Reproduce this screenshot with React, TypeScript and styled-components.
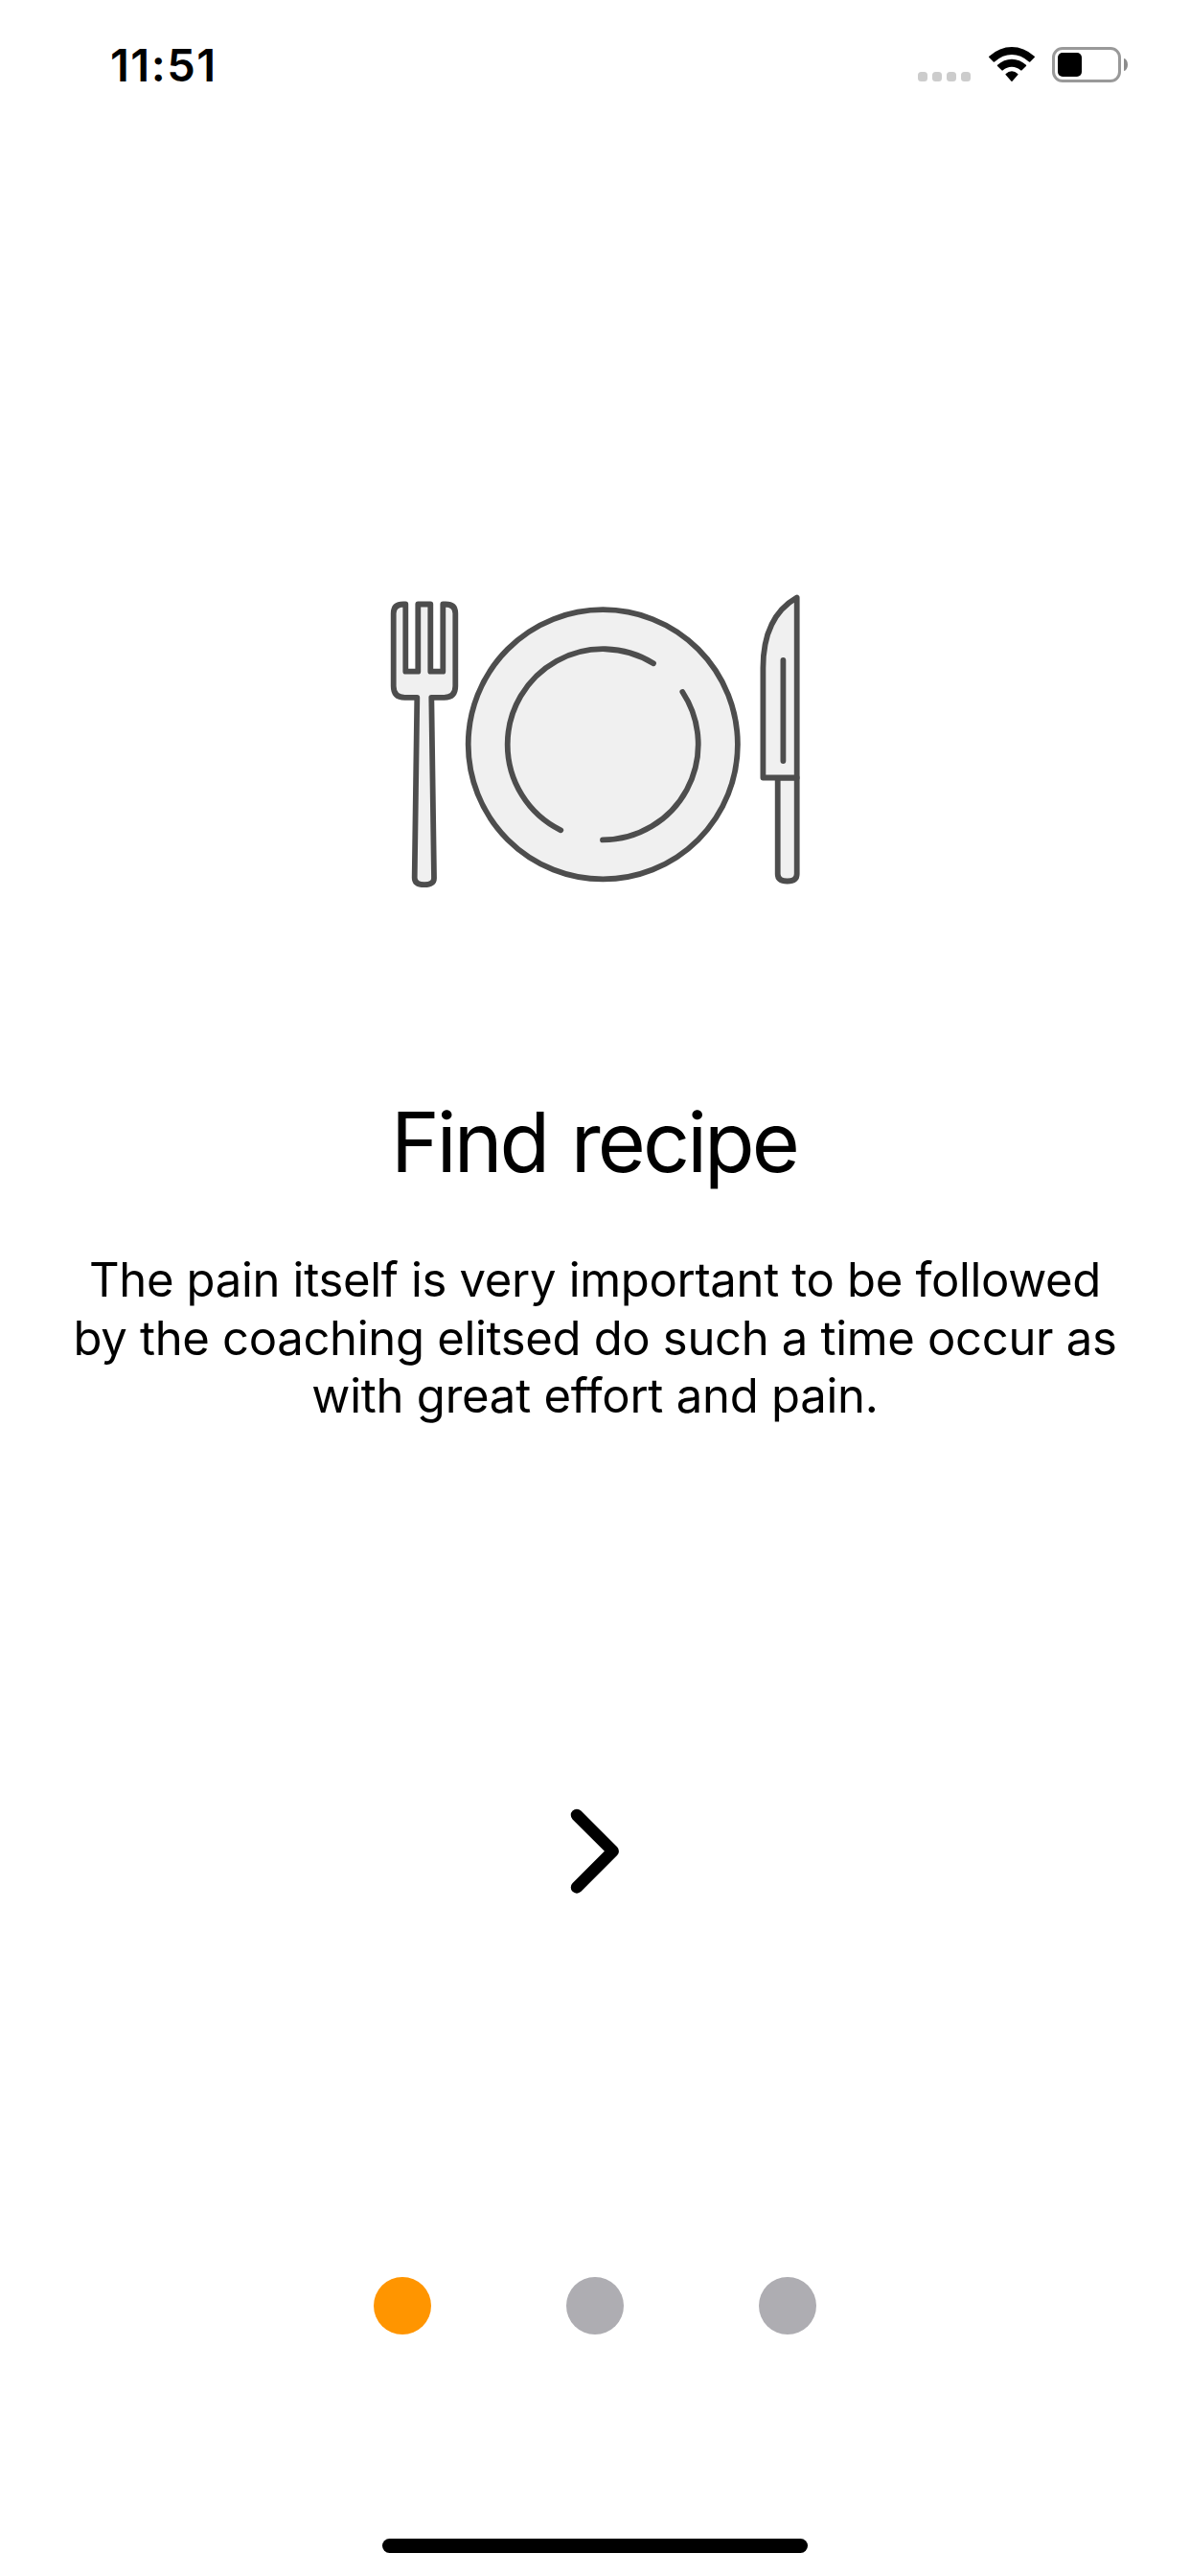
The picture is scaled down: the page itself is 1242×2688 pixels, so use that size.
import React from "react";
import styled, { createGlobalStyle } from "styled-components";

const GlobalStyle = createGlobalStyle`
  body {
    margin: 0;
    background: #fff;
  }
`;

const Screen = styled.main`
  display: flex;
  flex-direction: column;
  align-items: center;
  box-sizing: border-box;
  width: 1242px;
  height: 2688px;
  overflow: hidden;
  background: #fff;
  color: #000;
  font-family: Inter, "Liberation Sans", sans-serif;
`;

const StatusBar = styled.header`
  display: flex;
  align-items: flex-start;
  justify-content: space-between;
  box-sizing: border-box;
  width: 100%;
  height: 132px;
  padding: 39px 65px 0 115px;
`;

const Clock = styled.time`
  font-size: 47px;
  font-weight: 600;
  line-height: 57px;
  letter-spacing: 1.5px;
`;

const Indicators = styled.div`
  display: flex;
  align-items: flex-start;
  padding-top: 10px;
`;

const Signal = styled.div`
  display: flex;
  gap: 5px;
  margin: 26px 18.5px 0 0;
`;

const SignalDot = styled.span`
  width: 10px;
  height: 10px;
  border-radius: 3.5px;
  background: #ccc;
`;

const WifiIcon = styled.svg`
  width: 48px;
  height: 36px;
  margin-right: 18.5px;
`;

const Battery = styled.div`
  display: flex;
  align-items: center;
  gap: 3px;
`;

const BatteryBody = styled.div`
  box-sizing: border-box;
  width: 72px;
  height: 37px;
  padding: 3px;
  border: 3px solid #999;
  border-radius: 11px;
`;

const BatteryCharge = styled.div<{ $level: number }>`
  width: ${({ $level }) => $level}px;
  height: 25px;
  border-radius: 5px;
  background: #000;
`;

const BatteryCap = styled.div`
  width: 4px;
  height: 13px;
  border-radius: 0 4px 4px 0 / 0 6.5px 6.5px 0;
  background: #8c8c8c;
`;

const Illustration = styled.svg`
  width: 440px;
  height: 320px;
  margin-top: 478px;
`;

const Title = styled.h1`
  margin: 210px 2px 0 0;
  font-size: 86px;
  font-weight: 400;
  line-height: 104px;
  letter-spacing: -2.9px;
  word-spacing: 3px;
`;

const Description = styled.p`
  display: flex;
  flex-direction: column;
  align-items: center;
  margin: 62px 0 0;
  font-size: 49px;
  line-height: 60.5px;
  white-space: nowrap;
`;

const Line = styled.span<{ $tracking: number }>`
  letter-spacing: ${({ $tracking }) => $tracking}px;
`;

const NextButton = styled.button`
  display: flex;
  align-items: center;
  justify-content: center;
  width: 100px;
  height: 120px;
  margin-top: 384.5px;
  padding: 0;
  border: 0;
  background: none;
`;

const Pager = styled.nav`
  display: flex;
  gap: 141px;
  margin-top: 384px;
`;

const PageDot = styled.span<{ $active?: boolean }>`
  width: 60px;
  height: 60px;
  border-radius: 50%;
  background: ${({ $active }) => ($active ? "#ff9500" : "#aeadb2")};
`;

const HomeIndicator = styled.div`
  width: 444px;
  height: 15px;
  margin: auto 0 24px;
  border-radius: 8px;
  background: #000;
`;

const lines = [
  { text: "The pain itself is very important to be followed", tracking: -0.32 },
  { text: "by the coaching elitsed do such a time occur as", tracking: -0.32 },
  { text: "with great effort and pain.", tracking: -0.24 },
];

const pages = ["find", "cook", "share"];

export default function App() {
  return (
    <>
      <GlobalStyle />
      <Screen>
        <StatusBar>
          <Clock>11:51</Clock>
          <Indicators>
            <Signal>
              <SignalDot />
              <SignalDot />
              <SignalDot />
              <SignalDot />
            </Signal>
            <WifiIcon viewBox="275 57 143 108" preserveAspectRatio="none">
              <path d="M276 86Q309 57 346.500 57T417 86Q419 88 417 90L403 104Q401 105 399 103Q375 81 346.500 81T294 103Q292 105 290 104L276 90Q274 88 276 86Z" />
              <path d="M302 113Q322 95 346.500 95T391 113Q393 115 391 117L378 130Q376 132 374 130Q362 119 346.500 119T319 130Q317 132 315 130L302 117Q300 115 302 113Z" />
              <path d="M328 141Q336 133 346.500 133T365 141Q367 143 365 145L348 164Q346.500 165.500 345 164L328 145Q326 143 328 141Z" />
            </WifiIcon>
            <Battery>
              <BatteryBody>
                <BatteryCharge $level={25} />
              </BatteryBody>
              <BatteryCap />
            </Battery>
          </Indicators>
        </StatusBar>

        <Illustration
          viewBox="401 610 440 320"
          fill="#f0f0f0"
          stroke="#4d4d4d"
          strokeWidth="5.8"
          strokeLinecap="round"
          strokeLinejoin="round"
        >
          {/* fork */}
          <path d="M423.300 630.500H421Q410.700 630.500 410.700 640V716Q410.700 727.800 422.500 727.800H435.300L432.700 916Q432.700 923.200 442.900 923.200T453 916L450.300 727.800H463.500Q475.300 727.800 475.300 716V640Q475.300 630.500 465 630.500H462.300V700.700H449.300V630.500H436.300V700.700H423.300Z" />
          {/* plate */}
          <circle cx="629.3" cy="776.8" r="140.600" />
          <path
            fill="none"
            d="M585.300 866.300A99.600 99.600 0 0 1 529.700 776.800A99.600 99.600 0 0 1 682 692.300M712.300 722A99.600 99.600 0 0 1 629 876.400"
          />
          {/* knife */}
          <path d="M811.700 811.500V912Q811.700 919.500 821.700 919.500T831.700 912V811.500Z" />
          <path d="M831.700 623.500V811.500H796.400V697C796.400 663 808 637 831.700 623.500Z" />
          <path d="M817.400 689V794" />
        </Illustration>

        <Title>Find recipe</Title>
        <Description>
          {lines.map(({ text, tracking }) => (
            <Line key={text} $tracking={tracking}>
              {text}
            </Line>
          ))}
        </Description>

        <NextButton aria-label="Next">
          <svg width="100" height="120" viewBox="571 1872 100 120">
            <path
              d="M602 1894L639.700 1931.700L602 1969.400"
              fill="none"
              stroke="#000"
              strokeWidth="12.500"
              strokeLinecap="round"
              strokeLinejoin="round"
            />
          </svg>
        </NextButton>

        <Pager>
          {pages.map((page, index) => (
            <PageDot key={page} $active={index === 0} />
          ))}
        </Pager>
        <HomeIndicator />
      </Screen>
    </>
  );
}
